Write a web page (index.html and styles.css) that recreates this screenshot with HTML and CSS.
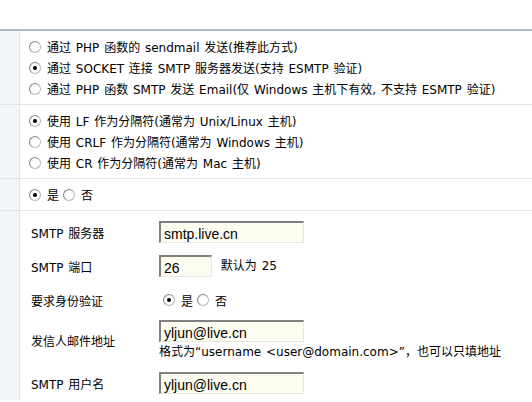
FILE: index.html
```html
<html lang="zh-CN">
<head>
    <meta charset="UTF-8">
    <title>邮件设置</title>
    <link rel="stylesheet" href="styles.css">
</head>
<body>
    <div class="settings">
        <div class="row">
            <div class="side"></div>
            <div class="cell">
                <label class="opt"><input type="radio" name="mailsend"> 通过 PHP 函数的 sendmail 发送(推荐此方式)</label>
                <label class="opt"><input type="radio" name="mailsend" checked> 通过 SOCKET 连接 SMTP 服务器发送(支持 ESMTP 验证)</label>
                <label class="opt"><input type="radio" name="mailsend"> 通过 PHP 函数 SMTP 发送 Email(仅 Windows 主机下有效, 不支持 ESMTP 验证)</label>
            </div>
        </div>
        <div class="row">
            <div class="side"></div>
            <div class="cell">
                <label class="opt"><input type="radio" name="delimiter" checked> 使用 LF 作为分隔符(通常为 Unix/Linux 主机)</label>
                <label class="opt"><input type="radio" name="delimiter"> 使用 CRLF 作为分隔符(通常为 Windows 主机)</label>
                <label class="opt"><input type="radio" name="delimiter"> 使用 CR 作为分隔符(通常为 Mac 主机)</label>
            </div>
        </div>
        <div class="row">
            <div class="side"></div>
            <div class="cell">
                <div class="opt">
                    <label><input type="radio" name="silent" checked> 是</label>
                    <label><input type="radio" name="silent"> 否</label>
                </div>
            </div>
        </div>
        <div class="row last">
            <div class="side"></div>
            <div class="smtp">
                <div class="field">
                    <span class="name">SMTP 服务器</span>
                    <div><input class="text" type="text" value="smtp.live.cn"></div>
                </div>
                <div class="field">
                    <span class="name">SMTP 端口</span>
                    <div><input class="text short" type="text" value="26"> <span class="note">默认为 25</span></div>
                </div>
                <div class="field">
                    <span class="name">要求身份验证</span>
                    <div class="pair">
                        <label><input type="radio" name="auth" checked> 是</label>
                        <label><input type="radio" name="auth"> 否</label>
                    </div>
                </div>
                <div class="field tall">
                    <span class="name">发信人邮件地址</span>
                    <div>
                        <input class="text" type="text" value="yljun@live.cn">
                        <div class="hint">格式为“username &lt;user@domain.com&gt;”，也可以只填地址</div>
                    </div>
                </div>
                <div class="field">
                    <span class="name">SMTP 用户名</span>
                    <div><input class="text" type="text" value="yljun@live.cn"></div>
                </div>
            </div>
        </div>
    </div>
</body>
</html>
```

FILE: styles.css
```css
body {
    margin: 0;
    background-color: #fff;
    font: 12px "DejaVu Sans", "Noto Sans CJK SC", sans-serif;
    word-spacing: 1px;
    color: #000;
}
.settings {
    margin-top: 29px;
    border-top: 2px solid #a6bdcb;
}
.settings .row {
    display: grid;
    grid-template-columns: 20px 1fr;
    border-bottom: 1px solid #dfe4e8;
}
.settings .row.last {
    border-bottom: none;
}
.settings .side {
    background-color: #f3f6f9;
    border-right: 1px solid #dfe4e8;
}
.settings .cell {
    padding: 5px 0 5px 9px;
}
.opt {
    display: flex;
    align-items: center;
    height: 21px;
    gap: 4px;
}
.opt label, .pair label {
    display: flex;
    align-items: center;
    gap: 4px;
}
input[type="radio"] {
    appearance: none;
    -webkit-appearance: none;
    width: 12px;
    height: 12px;
    margin: 0 2px 0 0;
    border-radius: 50%;
    border: 1px solid #b8b8b8;
    border-top-color: #8a8a8a;
    border-left-color: #8a8a8a;
    background: radial-gradient(circle at 60% 60%, #fff 40%, #e6e6e6 100%);
    position: relative;
}
input[type="radio"]:checked::after {
    content: "";
    position: absolute;
    left: 3px;
    top: 3px;
    width: 4px;
    height: 4px;
    border-radius: 50%;
    background-color: #000;
}
.smtp {
    padding: 4px 0 0 11px;
}
.smtp .field {
    display: grid;
    grid-template-columns: 128px 1fr;
    align-items: center;
    padding: 6px 0;
}
.smtp .field.tall {
    padding: 3px 0 6px;
}
.pair {
    display: flex;
    align-items: center;
    gap: 4px;
    height: 22px;
    padding-left: 4px;
}
.text {
    box-sizing: border-box;
    width: 145px;
    height: 22px;
    margin: 0;
    padding: 2px 3px 0;
    font: 14px "Liberation Sans", sans-serif;
    word-spacing: 0;
    color: #000;
    background-color: #fcfcf0;
    border: 1px solid #e6e6dc;
    border-top: 2px solid #808080;
    border-left: 2px solid #808080;
    vertical-align: middle;
}
.text.short {
    width: 53px;
}
.note {
    margin-left: 4px;
}
.hint {
    margin-top: 2px;
    line-height: 16px;
}
```
